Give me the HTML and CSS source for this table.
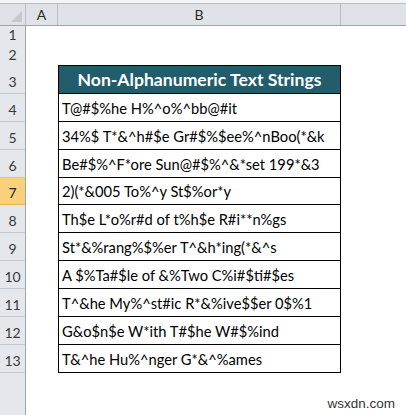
FILE: index.html
```html
<!DOCTYPE html>
<html>
<head>
<meta charset="utf-8">
<link rel="stylesheet" href="styles.css">
</head>
<body>
<div class="sheet">
  <div class="topstrip"></div>
  <div class="row colhead">
    <div class="corner"><span class="tri"></span></div>
    <div class="ch">A</div>
    <div class="ch">B</div>
    <div class="ch last"></div>
  </div>
  <div class="row r20"><div class="rh">1</div><div class="c"></div><div class="c"></div><div class="c"></div></div>
  <div class="row r19"><div class="rh">2</div><div class="c"></div><div class="c"></div><div class="c"></div></div>
  <div class="row r29"><div class="rh">3</div><div class="c"></div><div class="c tblhead">Non-Alphanumeric Text Strings</div><div class="c"></div></div>
  <div class="row r28"><div class="rh">4</div><div class="c"></div><div class="c tb">T@#$%he H%^o%^bb@#it</div><div class="c"></div></div>
  <div class="row r28"><div class="rh">5</div><div class="c"></div><div class="c tb">34%$ T*&amp;^h#$e Gr#$%$ee%^nBoo(*&amp;k</div><div class="c"></div></div>
  <div class="row r28"><div class="rh">6</div><div class="c"></div><div class="c tb">Be#$%^F*ore Sun@#$%^&amp;*set 199*&amp;3</div><div class="c"></div></div>
  <div class="row r27"><div class="rh sel">7</div><div class="c"></div><div class="c tb">2)(*&amp;005 To%^y St$%or*y</div><div class="c"></div></div>
  <div class="row r28"><div class="rh">8</div><div class="c"></div><div class="c tb">Th$e L*o%r#d of t%h$e R#i**n%gs</div><div class="c"></div></div>
  <div class="row r28"><div class="rh">9</div><div class="c"></div><div class="c tb">St*&amp;%rang%$%er T^&amp;h*ing(*&amp;^s</div><div class="c"></div></div>
  <div class="row r28"><div class="rh">10</div><div class="c"></div><div class="c tb">A $%Ta#$le of &amp;%Two C%i#$ti#$es</div><div class="c"></div></div>
  <div class="row r28"><div class="rh">11</div><div class="c"></div><div class="c tb">T^&amp;he My%^st#ic R*&amp;%ive$$er 0$%1</div><div class="c"></div></div>
  <div class="row r28"><div class="rh">12</div><div class="c"></div><div class="c tb">G&amp;o$n$e W*ith T#$he W#$%ind</div><div class="c"></div></div>
  <div class="row r28"><div class="rh">13</div><div class="c"></div><div class="c tb">T&amp;^he Hu%^nger G*&amp;^%ames</div><div class="c"></div></div>
  <div class="row rest"><div class="rh empty"></div><div class="c"></div><div class="c"></div><div class="c"></div></div>
  <span class="wm">wsxdn.com</span>
</div>
</body>
</html>
```

FILE: styles.css
```css
* { box-sizing: border-box; }
html, body { margin: 0; padding: 0; background: #fff; }
body { width: 406px; height: 415px; overflow: hidden; font-family: Lato, "Open Sans", sans-serif; }
.sheet { display: flex; flex-direction: column; height: 415px; position: relative; }
.topstrip { height: 4px; background: #f3f4f6; border-bottom: 1px solid #b9bec6; flex: none; }
.row { display: grid; grid-template-columns: 26px 32px 283px 1fr; flex: none; }
.colhead { height: 22px; background: #dfe3e8; border-bottom: 1px solid #9da4ad; }
.corner { border-right: 1px solid #b6bcc4; position: relative; }
.tri { position: absolute; right: 3px; bottom: 3px; width: 0; height: 0; border-left: 11px solid transparent; border-bottom: 11px solid #c4c9d0; }
.ch { border-right: 1px solid #b6bcc4; display: flex; align-items: center; justify-content: center; font-size: 14px; color: #2b2b2b; }
.ch.last { border-right: none; }
.r20 { height: 20px; }
.r19 { height: 19px; }
.r29 { height: 29px; }
.r28 { height: 28px; }
.r27 { height: 27px; }
.rest { flex: 1 1 auto; }
.rh { background: #e4e7eb; border-right: 1px solid #9da4ad; border-bottom: 1px solid #c3c8cf; display: flex; align-items: flex-end; justify-content: center; padding-bottom: 3px; font-size: 14px; color: #3a3a3a; }
.rh.sel { background: #f8d27a; border-bottom-color: #e2b650; color: #222; }
.rh.empty { border-bottom: none; }
.c { position: relative; }
.tblhead { background: #225d6b; color: #fff; font-weight: bold; font-size: 17.6px; border: 1px solid #000; display: flex; align-items: center; justify-content: center; }
.tb { border-left: 1px solid #000; border-right: 1px solid #000; border-bottom: 1px solid #000; display: flex; align-items: flex-end; padding-left: 3px; padding-bottom: 4px; font-size: 14.7px; color: #000; white-space: nowrap; }
.wm { position: absolute; right: 11px; bottom: 4px; font-family: "Liberation Sans", Arial, sans-serif; font-size: 13.5px; line-height: 15px; color: #333; white-space: nowrap; }
```
